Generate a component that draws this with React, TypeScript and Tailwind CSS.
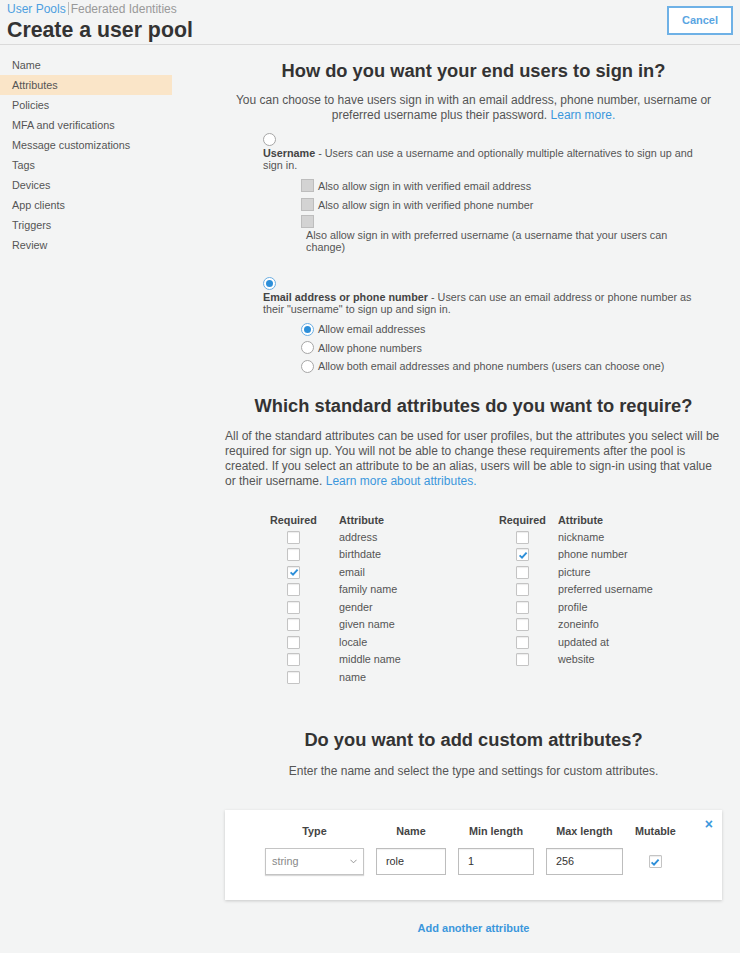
import React from "react";

const FONT = "font-['Liberation_Sans',Arial,sans-serif]";

function Check() {
  return (
    <svg viewBox="0 0 10 10" className="w-[10px] h-[10px]">
      <path d="M1.6 5.4 L4 7.6 L8.6 2.6" stroke="#2d8fd9" strokeWidth="1.9" fill="none" />
    </svg>
  );
}

function Box({ checked = false }: { checked?: boolean }) {
  return (
    <span className="w-[13px] h-[13px] border border-[#c4c4c4] bg-white rounded-[1px] shadow-[inset_0_1px_1px_rgba(0,0,0,0.08)] flex items-center justify-center">
      {checked && <Check />}
    </span>
  );
}

function GreyBox() {
  return <span className="block w-[13px] h-[13px] border border-[#bdbdbd] bg-[#d3d3d3] shrink-0" />;
}

function Radio({ on = false }: { on?: boolean }) {
  return (
    <span
      className={
        "w-[13px] h-[13px] rounded-full border bg-white flex items-center justify-center shrink-0 " +
        (on ? "border-[#6aaee3]" : "border-[#a6a6a6]")
      }
    >
      {on && <span className="w-[7px] h-[7px] rounded-full bg-[#2d8fd9]" />}
    </span>
  );
}

const nav = [
  "Name",
  "Attributes",
  "Policies",
  "MFA and verifications",
  "Message customizations",
  "Tags",
  "Devices",
  "App clients",
  "Triggers",
  "Review",
];

const leftAttrs: [string, boolean][] = [
  ["address", false],
  ["birthdate", false],
  ["email", true],
  ["family name", false],
  ["gender", false],
  ["given name", false],
  ["locale", false],
  ["middle name", false],
  ["name", false],
];

const rightAttrs: [string, boolean][] = [
  ["nickname", false],
  ["phone number", true],
  ["picture", false],
  ["preferred username", false],
  ["profile", false],
  ["zoneinfo", false],
  ["updated at", false],
  ["website", false],
];

function AttrTable({ rows, gap }: { rows: [string, boolean][]; gap: string }) {
  return (
    <div className="text-[10.8px] leading-[17.5px] text-[#555]">
      <div className="flex font-bold text-[#444] h-[18px] leading-[18px]">
        <div className="w-[47px]">Required</div>
        <div className={gap}>Attribute</div>
      </div>
      {rows.map(([label, checked]) => (
        <div key={label} className="flex items-center h-[17.5px]">
          <div className="w-[47px] flex justify-center">
            <Box checked={checked} />
          </div>
          <div className={gap}>{label}</div>
        </div>
      ))}
    </div>
  );
}

function Input({ value, w }: { value: string; w: string }) {
  return (
    <div className={"h-[27px] border border-[#bdbdbd] bg-white flex items-center pl-[9px] text-[10.8px] text-[#333] shadow-[inset_0_1px_1px_rgba(0,0,0,0.06)] " + w}>
      {value}
    </div>
  );
}

export default function App() {
  return (
    <div className={FONT + " min-h-[953px] bg-[#f3f4f4] text-[#555]"}>
      <header className="h-[45px] border-b border-[#dadada] flex justify-between px-[7px]">
        <div className="pt-[2px]">
          <div className="flex items-center text-[12px] leading-[12px]">
            <span className="text-[#4d9fe0]">User Pools</span>
            <span className="mx-[2px] w-px h-[13px] bg-[#bbb]" />
            <span className="text-[#999]">Federated Identities</span>
          </div>
          <h1 className="mt-[3px] text-[21.3px] leading-[24px] font-bold text-[#333]">Create a user pool</h1>
        </div>
        <button
          type="button"
          className="mt-[6px] w-[66px] h-[29px] border-2 border-[#6eb1e6] bg-white text-[11px] font-bold text-[#5aa5e2]"
        >
          Cancel
        </button>
      </header>

      <div className="flex">
        <nav className="w-[172px] shrink-0 pt-[10px]">
          {nav.map((item) => (
            <div
              key={item}
              className={
                "h-[20px] leading-[20px] pl-[12px] text-[10.8px] text-[#555] " +
                (item === "Attributes" ? "bg-[#fae5c8] text-[#444]" : "")
              }
            >
              {item}
            </div>
          ))}
        </nav>

        <main className="flex-1 pl-[53px] pr-[18px] pt-[14px] pb-[10px]">
          <h2 className="text-center text-[18.3px] leading-[24px] font-bold text-[#333]">
            How do you want your end users to sign in?
          </h2>
          <p className="mt-[10px] text-center text-[12px] leading-[15px] text-[#555]">
            You can choose to have users sign in with an email address, phone number, username or preferred
            username plus their password. <span className="text-[#3b97dc]">Learn more.</span>
          </p>

          <div className="ml-[38px] mt-[10px] text-[10.8px] leading-[12px]">
            <Radio />
            <p className="mt-[1px] w-[440px]">
              <b className="text-[#444]">Username</b> - Users can use a username and optionally multiple
              alternatives to sign up and sign in.
            </p>
            <div className="ml-[38px] mt-[5px]">
              <div className="h-[19px] flex items-center gap-[4px]">
                <GreyBox />
                <span>Also allow sign in with verified email address</span>
              </div>
              <div className="h-[19px] flex items-center gap-[4px]">
                <GreyBox />
                <span>Also allow sign in with verified phone number</span>
              </div>
              <div className="mt-[1px]">
                <GreyBox />
              </div>
              <p className="ml-[5px] mt-[1px] w-[380px]">
                Also allow sign in with preferred username (a username that your users can change)
              </p>
            </div>

            <div className="mt-[24px]">
              <Radio on />
            </div>
            <p className="mt-[1px] w-[440px]">
              <b className="text-[#444]">Email address or phone number</b> - Users can use an email address or
              phone number as their "username" to sign up and sign in.
            </p>
            <div className="ml-[38px] mt-[5px]">
              <div className="h-[18.5px] flex items-center gap-[4px]">
                <Radio on />
                <span>Allow email addresses</span>
              </div>
              <div className="h-[18.5px] flex items-center gap-[4px]">
                <Radio />
                <span>Allow phone numbers</span>
              </div>
              <div className="h-[18.5px] flex items-center gap-[4px]">
                <Radio />
                <span>Allow both email addresses and phone numbers (users can choose one)</span>
              </div>
            </div>
          </div>

          <h2 className="mt-[18px] text-center text-[18.3px] leading-[24px] font-bold text-[#333]">
            Which standard attributes do you want to require?
          </h2>
          <p className="mt-[11px] text-[12px] leading-[15px] text-[#555]">
            All of the standard attributes can be used for user profiles, but the attributes you select will be
            required for sign up. You will not be able to change these requirements after the pool is created. If
            you select an attribute to be an alias, users will be able to sign-in using that value or their
            username. <span className="text-[#3b97dc]">Learn more about attributes.</span>
          </p>

          <div className="mt-[22px] ml-[45px] flex">
            <div className="w-[229px]">
              <AttrTable rows={leftAttrs} gap="ml-[22px]" />
            </div>
            <AttrTable rows={rightAttrs} gap="ml-[12px]" />
          </div>

          <h2 className="mt-[42px] text-center text-[18.3px] leading-[24px] font-bold text-[#333]">
            Do you want to add custom attributes?
          </h2>
          <p className="mt-[12px] text-center text-[12px] leading-[15px] text-[#555]">
            Enter the name and select the type and settings for custom attributes.
          </p>

          <div className="relative mt-[31px] bg-white shadow-[0_1px_3px_rgba(0,0,0,0.18)] pl-[40px] pt-[14px] pb-[25px]">
            <span className="absolute right-[9px] top-[7px] text-[14px] leading-[14px] font-bold text-[#3b97dc]">
              ×
            </span>
            <div className="grid grid-cols-[99px_70px_76px_77px_40px] gap-x-[12px] text-[10.8px]">
              <div className="text-center font-bold leading-[14px] text-[#444]">Type</div>
              <div className="text-center font-bold leading-[14px] text-[#444]">Name</div>
              <div className="text-center font-bold leading-[14px] text-[#444]">Min length</div>
              <div className="text-center font-bold leading-[14px] text-[#444]">Max length</div>
              <div className="text-center font-bold leading-[14px] text-[#444]">Mutable</div>

              <div className="mt-[10px] h-[27px] border border-[#c4c4c4] bg-white flex items-center justify-between pl-[6px] pr-[6px] text-[#888] shadow-[0_1px_1px_rgba(0,0,0,0.15)]">
                <span>string</span>
                <svg viewBox="0 0 8 5" className="w-[7px] h-[5px]">
                  <path d="M0.5 0.5 L4 4 L7.5 0.5" stroke="#888" strokeWidth="1" fill="none" />
                </svg>
              </div>
              <div className="mt-[10px]">
                <Input value="role" w="w-[70px]" />
              </div>
              <div className="mt-[10px]">
                <Input value="1" w="w-[76px]" />
              </div>
              <div className="mt-[10px]">
                <Input value="256" w="w-[77px]" />
              </div>
              <div className="mt-[10px] h-[27px] flex items-center justify-center">
                <Box checked />
              </div>
            </div>
          </div>

          <div className="mt-[21px] text-center text-[11px] leading-[14px] font-bold text-[#3b97dc]">
            Add another attribute
          </div>
        </main>
      </div>
    </div>
  );
}
